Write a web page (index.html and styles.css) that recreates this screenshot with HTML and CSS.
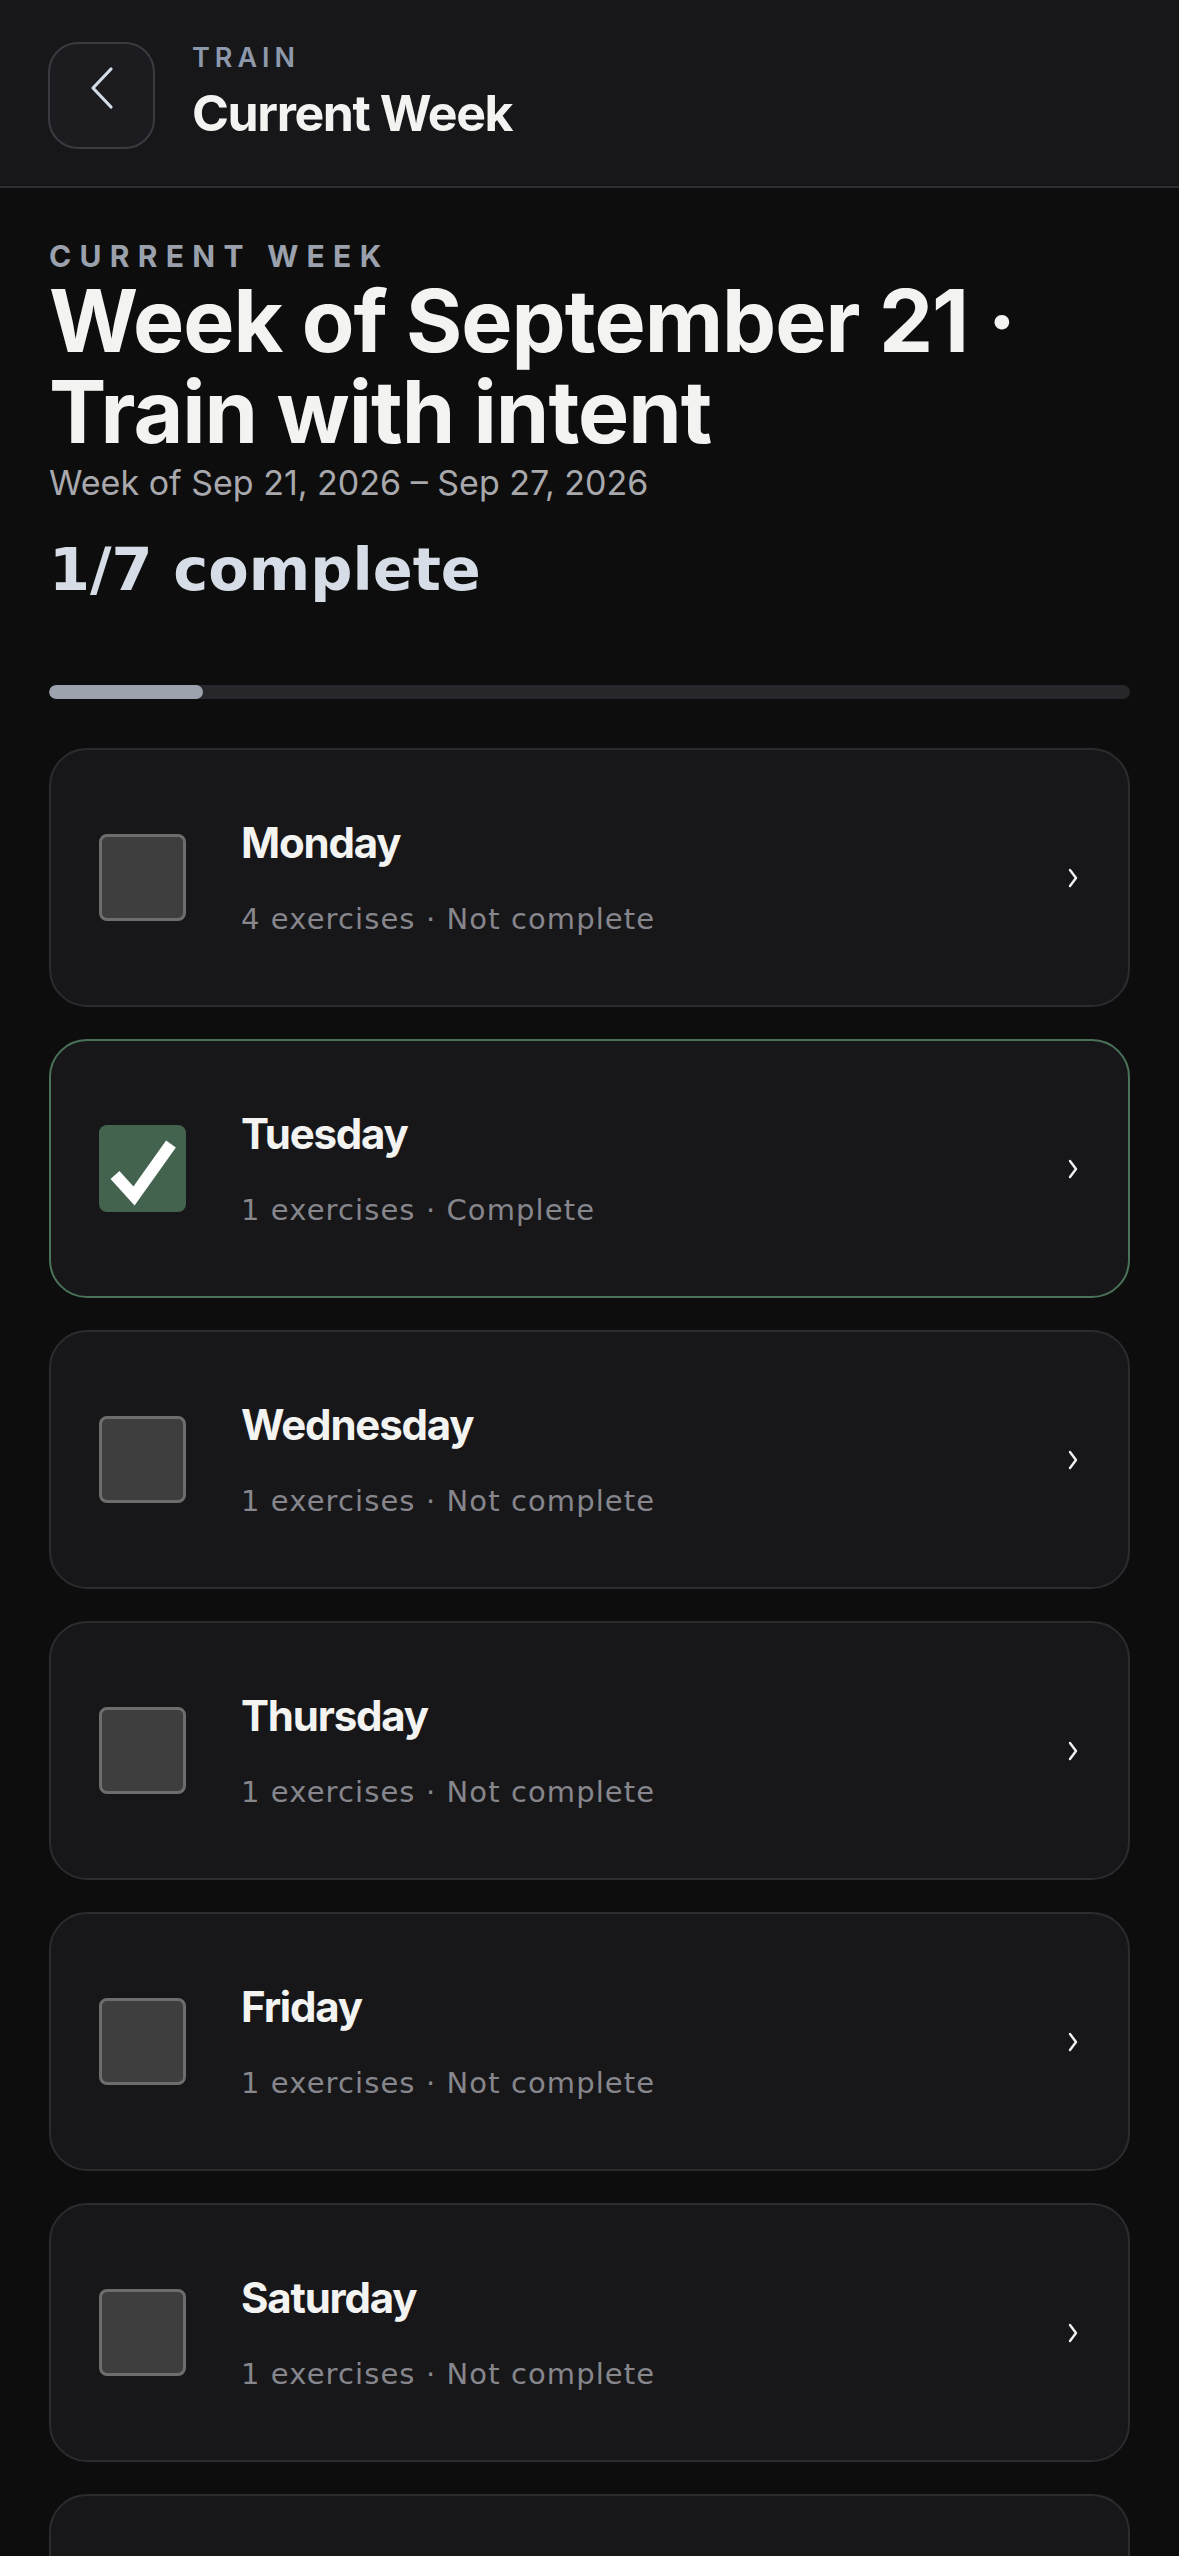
FILE: index.html
```html
<!DOCTYPE html>
<html>
<head>
    <meta charset="UTF-8">
    <title>Current Week</title>
    <link rel="stylesheet" href="styles.css">
</head>
<body>
    <header class="topbar">
        <button class="back-btn" aria-label="Back">
            <svg width="26" height="44" viewBox="0 0 26 44"><polyline points="22,3 4,22 22,41" fill="none" stroke="#d6dce6" stroke-width="3.2" stroke-linecap="round" stroke-linejoin="round"/></svg>
        </button>
        <div class="topbar-text">
            <div class="eyebrow">TRAIN</div>
            <div class="screen-title">Current Week</div>
        </div>
    </header>

    <main class="content">
        <div class="kicker">CURRENT WEEK</div>
        <h1 class="week-title">Week of September 21 · Train with intent</h1>
        <div class="week-range">Week of Sep 21, 2026 – Sep 27, 2026</div>
        <div class="week-count">1/7 complete</div>
        <div class="progress"><div class="progress-fill" style="width: 14.29%"></div></div>

        <div class="days">
            <div class="day-card">
                <div class="check"></div>
                <div class="day-info">
                    <div class="day-name">Monday</div>
                    <div class="day-meta">4 exercises · Not complete</div>
                </div>
                <svg class="chev" width="14" height="20" viewBox="0 0 14 20"><polyline points="4,2 10,10 4,18" fill="none" stroke="#f2f2f2" stroke-width="2.4" stroke-linecap="round" stroke-linejoin="round"/></svg>
            </div>
            <div class="day-card done">
                <div class="check">
                    <svg width="86" height="86" viewBox="0 0 86 86"><polyline points="16,50 35,71 72,19" fill="none" stroke="#fff" stroke-width="12"/></svg>
                </div>
                <div class="day-info">
                    <div class="day-name">Tuesday</div>
                    <div class="day-meta">1 exercises · Complete</div>
                </div>
                <svg class="chev" width="14" height="20" viewBox="0 0 14 20"><polyline points="4,2 10,10 4,18" fill="none" stroke="#f2f2f2" stroke-width="2.4" stroke-linecap="round" stroke-linejoin="round"/></svg>
            </div>
            <div class="day-card">
                <div class="check"></div>
                <div class="day-info">
                    <div class="day-name">Wednesday</div>
                    <div class="day-meta">1 exercises · Not complete</div>
                </div>
                <svg class="chev" width="14" height="20" viewBox="0 0 14 20"><polyline points="4,2 10,10 4,18" fill="none" stroke="#f2f2f2" stroke-width="2.4" stroke-linecap="round" stroke-linejoin="round"/></svg>
            </div>
            <div class="day-card">
                <div class="check"></div>
                <div class="day-info">
                    <div class="day-name">Thursday</div>
                    <div class="day-meta">1 exercises · Not complete</div>
                </div>
                <svg class="chev" width="14" height="20" viewBox="0 0 14 20"><polyline points="4,2 10,10 4,18" fill="none" stroke="#f2f2f2" stroke-width="2.4" stroke-linecap="round" stroke-linejoin="round"/></svg>
            </div>
            <div class="day-card">
                <div class="check"></div>
                <div class="day-info">
                    <div class="day-name">Friday</div>
                    <div class="day-meta">1 exercises · Not complete</div>
                </div>
                <svg class="chev" width="14" height="20" viewBox="0 0 14 20"><polyline points="4,2 10,10 4,18" fill="none" stroke="#f2f2f2" stroke-width="2.4" stroke-linecap="round" stroke-linejoin="round"/></svg>
            </div>
            <div class="day-card">
                <div class="check"></div>
                <div class="day-info">
                    <div class="day-name">Saturday</div>
                    <div class="day-meta">1 exercises · Not complete</div>
                </div>
                <svg class="chev" width="14" height="20" viewBox="0 0 14 20"><polyline points="4,2 10,10 4,18" fill="none" stroke="#f2f2f2" stroke-width="2.4" stroke-linecap="round" stroke-linejoin="round"/></svg>
            </div>
            <div class="day-card">
                <div class="check"></div>
                <div class="day-info">
                    <div class="day-name">Sunday</div>
                    <div class="day-meta">1 exercises · Not complete</div>
                </div>
                <svg class="chev" width="14" height="20" viewBox="0 0 14 20"><polyline points="4,2 10,10 4,18" fill="none" stroke="#f2f2f2" stroke-width="2.4" stroke-linecap="round" stroke-linejoin="round"/></svg>
            </div>
        </div>
    </main>
</body>
</html>
```

FILE: styles.css
```css
body {
    margin: 0;
    background-color: #0d0d0d;
    font-family: Inter, "Liberation Sans", sans-serif;
    color: #f3f3f1;
}
.topbar {
    display: flex;
    align-items: flex-start;
    gap: 37px;
    padding: 42px 48px 37px;
    background-color: #17171a;
    border-bottom: 2px solid #2c2c31;
}
.back-btn {
    width: 107px;
    height: 107px;
    flex-shrink: 0;
    display: flex;
    align-items: center;
    justify-content: center;
    padding: 0 0 16px 0;
    background-color: #1c1c20;
    border: 2px solid #3a3a40;
    border-radius: 30px;
}
.eyebrow {
    font-size: 27px;
    line-height: 32px;
    font-weight: 600;
    letter-spacing: 5px;
    color: #8d99ab;
}
.screen-title {
    margin-top: 11px;
    font-size: 50px;
    line-height: 56px;
    font-weight: 700;
    letter-spacing: -1.4px;
}
.content {
    padding: 50px 49px 0;
}
.kicker {
    font-size: 30px;
    line-height: 36px;
    font-weight: 700;
    letter-spacing: 8.3px;
    color: #9aa1ac;
}
.week-title {
    margin: 2px 0 0;
    font-size: 86px;
    line-height: 91px;
    font-weight: 700;
    letter-spacing: -1px;
}
.week-range {
    margin-top: 5px;
    font-size: 34px;
    line-height: 40px;
    letter-spacing: 0;
    color: #a9a9ad;
}
.week-count {
    margin-top: 32px;
    font-family: "DejaVu Sans", Inter, sans-serif;
    font-size: 59px;
    line-height: 70px;
    font-weight: 700;
    color: #d6dde7;
}
.progress {
    margin-top: 80px;
    height: 14px;
    border-radius: 7px;
    background-color: #27272b;
    overflow: hidden;
}
.progress-fill {
    height: 100%;
    border-radius: 7px;
    background-color: #9ca3ad;
}
.days {
    display: flex;
    flex-direction: column;
    gap: 32px;
    margin-top: 49px;
}
.day-card {
    display: flex;
    align-items: center;
    height: 259px;
    box-sizing: border-box;
    padding: 0 48px;
    background-color: #17171a;
    border: 2px solid #2b2b30;
    border-radius: 38px;
}
.day-card.done {
    border-color: #4a7259;
}
.check {
    width: 87px;
    height: 87px;
    flex-shrink: 0;
    box-sizing: border-box;
    background-color: #3e3e3e;
    border: 3px solid #6d6d6d;
    border-radius: 8px;
}
.day-card.done .check {
    border: none;
    background-color: #43634f;
}
.check svg {
    display: block;
}
.day-info {
    flex: 1;
    margin-left: 55px;
}
.day-name {
    font-size: 42px;
    line-height: 50px;
    font-weight: 700;
    letter-spacing: -1.2px;
}
.day-meta {
    margin-top: 33px;
    font-family: "DejaVu Sans", Inter, sans-serif;
    font-size: 29px;
    line-height: 36px;
    letter-spacing: 1.1px;
    color: #86868c;
}
.chev {
    flex-shrink: 0;
}
```
